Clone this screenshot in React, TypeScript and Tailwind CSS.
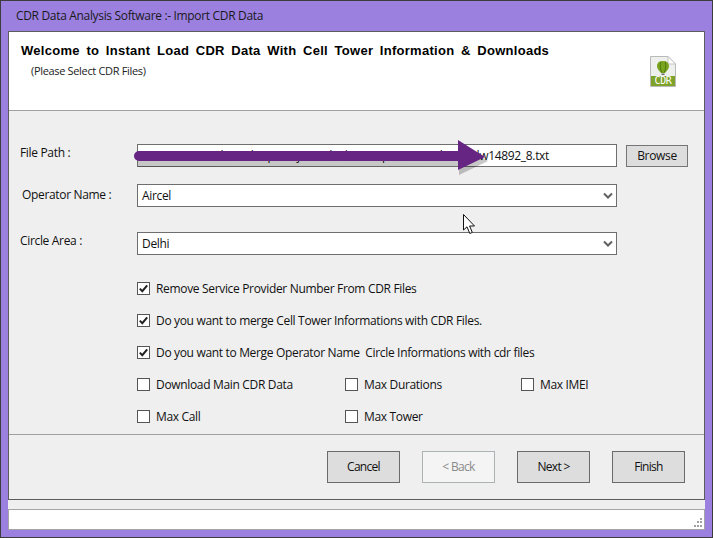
import { ReactNode } from 'react'

const font = "[font-family:'Open_Sans',sans-serif] tracking-[-0.33px]"

function Chevron() {
  return (
    <svg width="10" height="7" viewBox="0 0 10 7" className="shrink-0">
      <path d="M1 1.5 L5 5.5 L9 1.5" fill="none" stroke="#606060" strokeWidth="2" />
    </svg>
  )
}

function Select({ value }: { value: string }) {
  return (
    <div className="flex h-[23px] w-[480px] items-center justify-between border border-[#6e6e6e] bg-white pl-[4px] pr-[3px] text-[12px] text-[#111]">
      <span>{value}</span>
      <Chevron />
    </div>
  )
}

function Check({ label, on, className }: { label: string; on?: boolean; className?: string }) {
  return (
    <div className={`flex h-[13px] items-center gap-[6px] text-[12px] leading-none text-[#111] ${className ?? ''}`}>
      <div className="flex h-[13px] w-[13px] shrink-0 items-center justify-center border border-[#555] bg-white">
        {on && (
          <svg width="11" height="11" viewBox="0 0 11 11">
            <path d="M1.8 5.6 L4.3 8.2 L9.2 2.4" fill="none" stroke="#222" strokeWidth="2" />
          </svg>
        )}
      </div>
      <span className="whitespace-pre">{label}</span>
    </div>
  )
}

function WizButton({ children, disabled }: { children: ReactNode; disabled?: boolean }) {
  return (
    <div
      className={`flex h-[32px] w-[73px] items-center justify-center border text-[12px] tracking-[-0.7px] ${
        disabled ? 'border-[#adb2b5] bg-[#f4f4f4] text-[#8a8a8a]' : 'border-[#6b6b6b] bg-[#dddddd] text-[#111]'
      }`}
    >
      {children}
    </div>
  )
}

function FormRow({ label, labelClass, children }: { label: string; labelClass: string; children: ReactNode }) {
  return (
    <div className="flex items-start">
      <div className={`w-[128px] shrink-0 text-[12px] leading-[16px] text-[#111] ${labelClass}`}>{label}</div>
      {children}
    </div>
  )
}

function CdrIcon() {
  return (
    <svg width="26" height="31" viewBox="0 0 26 31">
      <path d="M0.5 0.5 H18 L25.5 8 V30.5 H0.5 Z" fill="#eef0ee" stroke="#b9b9b9" />
      <path d="M18 0.5 V8 H25.5 Z" fill="#ffffff" stroke="#c4c4c4" />
      <rect x="1" y="20" width="24" height="10" fill="#7fa22a" />
      <path d="M13 5 C8 5 7 8 7 10.5 C7 13 9.5 15 11 17 H15 C16.5 15 19 13 19 10.5 C19 8 18 5 13 5 Z" fill="#7aa51f" />
      <path d="M11 5.5 C9.8 9 10 13 11.8 16.5 M15 5.5 C16.2 9 16 13 14.2 16.5" fill="none" stroke="#4f7a10" />
      <rect x="11.5" y="17.5" width="3" height="1.5" fill="#6b6b6b" />
      <text x="13" y="28.2" textAnchor="middle" fontFamily="'DejaVu Sans Mono', monospace" fontSize="10" fill="#ffffff">CDR</text>
    </svg>
  )
}

export default function App() {
  return (
    <div className={`relative h-[538px] w-[713px] overflow-hidden border border-[#3c3c3c] bg-[#9b80e0] ${font}`}>
      <div className="flex h-[30px] items-center pl-[15px] text-[12px] text-[#1a1a1a]">
        CDR Data Analysis Software :- Import CDR Data
      </div>

      <div className="mx-[7px] flex h-[469px] flex-col border border-[#5d5d5d] bg-[#efefef]">
        <div className="h-[79px] shrink-0 border-b border-[#a0a0a0] bg-white">
          <div className="flex justify-between pl-[12px] pr-[28px]">
            <div>
              <div className="mt-[10px] text-[13px] font-bold leading-[18px] tracking-[0.28px] text-black [font-family:'Liberation_Sans',sans-serif] [word-spacing:2.7px]">
                Welcome to Instant Load CDR Data With Cell Tower Information &amp; Downloads
              </div>
              <div className="ml-[10px] mt-[3px] text-[11px] leading-[16px] text-[#222]">(Please Select CDR Files)</div>
            </div>
            <div className="mt-[24px]">
              <CdrIcon />
            </div>
          </div>
        </div>

        <div className="h-[324px] shrink-0 border-b border-[#a0a0a0] pt-[33px]">
          <FormRow label="File Path :" labelClass="pl-[11px] pt-[1px]">
            <div className="flex items-start gap-[9px]">
              <div className="h-[23px] w-[480px] overflow-hidden border border-[#6e6e6e] bg-white pl-[4px] text-right text-[12px] leading-[21px] text-[#111]">
                <span className="pr-[67px]">C:\Users\Vk\Desktop\Project\cdr\data\Import\Downloads\dw14892_8.txt</span>
              </div>
              <div className="mt-[1px] flex h-[22px] w-[62px] items-center justify-center border border-[#757575] bg-[#dddddd] text-[12px] text-[#111]">
                Browse
              </div>
            </div>
          </FormRow>
          <div className="mt-[17px]">
            <FormRow label="Operator Name :" labelClass="pl-[13px] pt-[3px]">
              <Select value="Aircel" />
            </FormRow>
          </div>
          <div className="mt-[25px]">
            <FormRow label="Circle Area :" labelClass="pl-[11px] pt-[1px]">
              <Select value="Delhi" />
            </FormRow>
          </div>

          <div className="ml-[128px] mt-[27px] flex flex-col gap-[19px]">
            <Check on label="Remove Service Provider Number From CDR Files" />
            <Check on label="Do you want to merge Cell Tower Informations with CDR Files." />
            <Check on label="Do you want to Merge Operator Name  Circle Informations with cdr files" />
            <div className="flex">
              <Check className="w-[208px]" label="Download Main CDR Data" />
              <Check className="w-[176px]" label="Max Durations" />
              <Check label="Max IMEI" />
            </div>
            <div className="flex">
              <Check className="w-[208px]" label="Max Call" />
              <Check label="Max Tower" />
            </div>
          </div>
        </div>

        <div className="flex grow items-start justify-end gap-[22px] pr-[19px] pt-[16px]">
          <WizButton>Cancel</WizButton>
          <WizButton disabled>&lt; Back</WizButton>
          <WizButton>Next &gt;</WizButton>
          <WizButton>Finish</WizButton>
        </div>
      </div>

      <div className="mx-[7px] h-[9px] bg-[#efefef]" />
      <div className="relative mx-[7px] h-[21px] border border-[#a5a5a5] bg-white">
        <svg width="10" height="10" viewBox="0 0 10 10" className="absolute bottom-[1px] right-[1px]" fill="#a0a0a0">
          <rect x="7" y="0" width="2" height="2" />
          <rect x="4" y="3" width="2" height="2" />
          <rect x="7" y="3" width="2" height="2" />
          <rect x="1" y="7" width="2" height="2" />
          <rect x="4" y="7" width="2" height="2" />
          <rect x="7" y="7" width="2" height="2" />
        </svg>
      </div>

      {/* arrow drawn over the file path box */}
      <svg width="380" height="44" viewBox="0 0 380 44" className="absolute left-[128px] top-[135px]">
        <path d="M8 18 L329 16 L329 6 L358 23 L329 37 L329 28 L8 29 Z" fill="#000" opacity="0.22" transform="translate(1 2)" />
        <path d="M10 15 L329 15 L329 4 L356 21 L329 34 L329 25 L10 25 A5 5 0 0 1 10 15 Z" fill="#662483" />
      </svg>

      {/* mouse pointer */}
      <svg width="13" height="22" viewBox="0 0 13 22" className="absolute left-[462px] top-[213px]">
        <path d="M0.5 0.5 V16 L4 12.8 L6.8 19.5 L9.3 18.4 L6.6 12 H11.5 Z" fill="#fff" stroke="#111" strokeWidth="1" />
      </svg>
    </div>
  )
}
